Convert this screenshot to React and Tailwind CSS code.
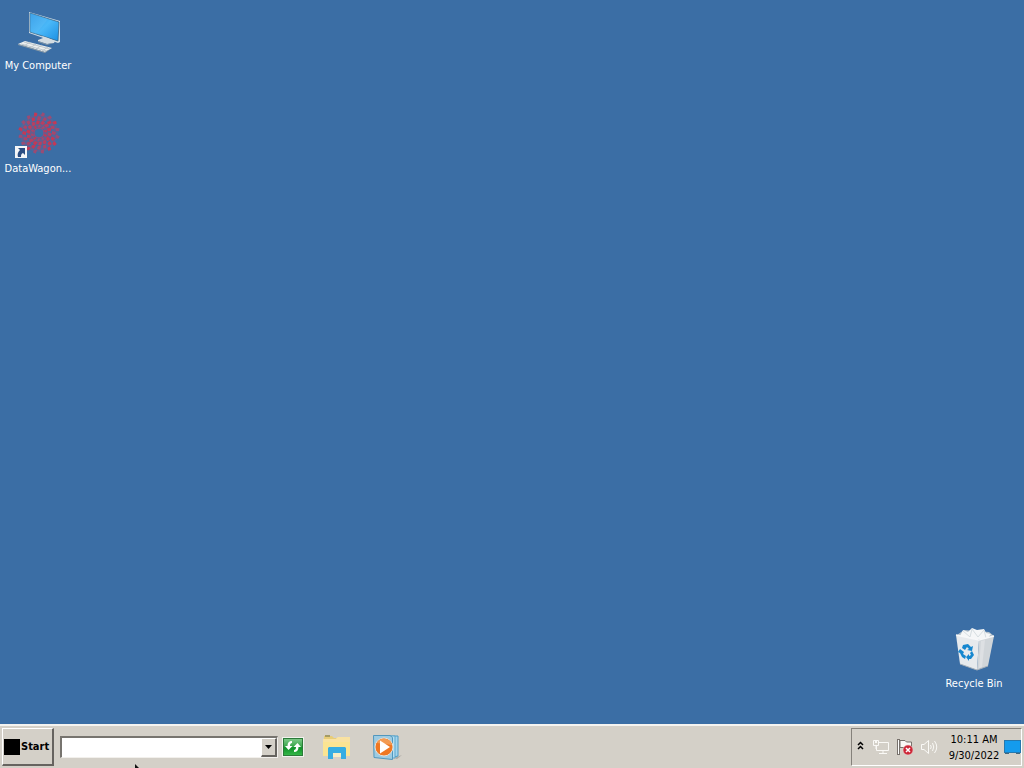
import React from "react";

const ringDots = [
  { r: 7, n: 10, s: 3, c: "#a8476c" },
  { r: 11, n: 14, s: 4, c: "#b93f60" },
  { r: 15, n: 16, s: 4, c: "#a94669" },
  { r: 19, n: 16, s: 4, c: "#9a4c74" },
];

function ComputerIcon() {
  return (
    <svg width="48" height="48" viewBox="0 0 48 48" aria-hidden="true">
      <defs>
        <linearGradient id="screen" x1="0" y1="0" x2="1" y2="1">
          <stop offset="0" stopColor="#2a93e2" />
          <stop offset="0.5" stopColor="#4ab8f8" />
          <stop offset="1" stopColor="#1a8fe3" />
        </linearGradient>
      </defs>
      <path d="M15 4 L46 13 L46 34 L44 35 L15 25 Z" fill="#cfdde6" />
      <path d="M16 5 L45 14 L44 33 L16 24 Z" fill="url(#screen)" stroke="#2c5878" strokeWidth="0.7" />
      <path d="M16 5 L34 11 L22 26 L16 24 Z" fill="#65c1f6" opacity="0.35" />
      <path d="M28 28 L34 30 L41 33 L40 35 L33 36 L24 33 L24 32 L29 30 Z" fill="#d3dce2" />
      <path d="M24 33 L33 36 L40 35 L33 37 L24 34 Z" fill="#8396a5" />
      <path d="M4 36 L11 33 L38 40 L31 44 Z" fill="#edf0f0" />
      <path d="M7 36 L33 43 M10 34 L36 41 M10 38 L16 34 M16 40 L22 36 M22 41 L28 37 M28 43 L34 39" stroke="#b5bfc4" strokeWidth="0.8" />
      <path d="M4 36 L31 44 L38 40 L31 45 L4 37 Z" fill="#8d9ba5" />
    </svg>
  );
}

function DataWagonIcon() {
  return (
    <svg width="48" height="48" viewBox="0 0 48 48" aria-hidden="true">
      <g transform="translate(25 22)">
        <circle r="9" fill="none" stroke="#9a4c74" strokeWidth="6" opacity="0.45" />
        <circle r="16" fill="none" stroke="#8a5382" strokeWidth="6" opacity="0.3" />
        {ringDots.map((ring) =>
          Array.from({ length: ring.n }, (_, i) => (
            <path
              key={`${ring.r}-${i}`}
              d={`M${ring.r - ring.s / 2} ${-ring.s / 2} l${ring.s} 1 l-1 ${ring.s - 1} l${1 - ring.s} -1 Z`}
              fill={i % 3 === 0 ? "#c43855" : ring.c}
              transform={`rotate(${(360 / ring.n) * i + ring.r * 3})`}
            />
          ))
        )}
        <circle r="5" fill="none" stroke="#b0426a" strokeWidth="1" />
      </g>
      <rect x="1" y="35" width="12" height="12" fill="#f4f6f8" />
      <path d="M4 37 H11 V44 L9 42 C7 43 7 44 7 46 H4 C3 43 4 41 6 39 Z" fill="#2b4d82" />
    </svg>
  );
}

function RecycleIcon() {
  return (
    <svg width="48" height="48" viewBox="0 0 48 48" aria-hidden="true">
      <path d="M7 9 L14 4 L39 6 L44 10 L37 13 L24 14 Z" fill="#b7c3cc" />
      <path d="M10 10 L13 4 L18 6 L22 2 L27 4 L34 3 L36 7 L41 8 L37 13 L22 13 Z" fill="#f5f7f8" />
      <path d="M13 5 L20 11 L22 3 L28 11 L34 4 L36 12" fill="none" stroke="#d6dde1" />
      <path d="M6 9 L29 14 L27 44 L10 38 Z" fill="#e7eaed" />
      <path d="M29 14 L44 10 L38 40 L27 44 Z" fill="#d0d5d9" />
      <path d="M31 15 L35 14 L32 41 L29 42 Z" fill="#dde0e3" />
      <path d="M6 9 L29 14 L44 10" fill="none" stroke="#f7f8f9" strokeWidth="1.3" />
      <path d="M10 38 L27 44 L38 40" fill="none" stroke="#a6afb8" />
      <g fill="#1687cf">
        <path d="M13 19 L18 18 L21 21 L23 20 L22 25 L17 24 L19 23 L17 21 L15 24 L12 22 Z" />
        <path d="M10 23 L14 26 L13 28 L16 30 L15 33 L12 31 L10 27 L8 26 Z" />
        <path d="M22 25 L24 29 L21 33 L19 33 L19 35 L16 31 L19 28 L19 30 L21 29 L20 27 Z" />
      </g>
    </svg>
  );
}

function DesktopItem({ label, children }) {
  return (
    <button
      type="button"
      className="flex w-19 flex-col items-center gap-0.5 text-[11px] leading-4 text-white"
    >
      {children}
      <span className="whitespace-nowrap">{label}</span>
    </button>
  );
}

function GoIcon() {
  return (
    <svg width="22" height="20" viewBox="0 0 22 20" aria-hidden="true">
      <defs>
        <linearGradient id="go" x1="0" y1="0" x2="0" y2="1">
          <stop offset="0" stopColor="#7cc887" />
          <stop offset="0.45" stopColor="#3aa84c" />
          <stop offset="0.55" stopColor="#0f9127" />
          <stop offset="1" stopColor="#35b648" />
        </linearGradient>
      </defs>
      <rect x="0.5" y="0.5" width="21" height="19" fill="#2c7a39" stroke="#f0f3ed" />
      <rect x="2" y="2" width="18" height="16" fill="url(#go)" />
      <path d="M10 4 V6 Q8 6 8 9 H10.500 L6.500 13 L3 9 H5.500 Q5.500 4 10 4 Z" fill="#fff" />
      <path d="M12 15 V13 Q14 13 14 10 H11.500 L15.500 6 L19 10 H16.500 Q16.500 15 12 15 Z" fill="#fff" />
    </svg>
  );
}

function FolderIcon() {
  return (
    <svg width="30" height="26" viewBox="0 0 30 26" aria-hidden="true">
      <path d="M2 2 H10 L12 4 H26 V8 H2 Z" fill="#e8cd78" />
      <path d="M3 1 H8 V3 H3 Z" fill="#a59b64" />
      <path d="M1 5 H14 L16 3 H28 V22 H1 Z" fill="#fbe492" />
      <path d="M1 5 H14 L16 3 H28 V8 H1 Z" fill="#f9e2a2" />
      <path d="M6 25 V14 L7 13 H23 L24 14 V25 H19 V19 H11 V25 Z" fill="#36ade2" />
      <path d="M11 19 H19 V23 H11 Z" fill="#f6edc6" />
    </svg>
  );
}

function MediaIcon() {
  return (
    <svg width="30" height="28" viewBox="0 0 30 28" aria-hidden="true">
      <path d="M22 25 L30 22 L25 26 Z" fill="#aaa8a2" />
      <path d="M14 3 H26 V23 L18 25 Z" fill="#a3d4ec" stroke="#4e9cc6" />
      <path d="M10 3 H23 V25 H14 Z" fill="#b6def0" stroke="#5ba6cd" />
      <path d="M1.500 2.500 H18 L20.500 4.500 V26.500 L2 24.500 Z" fill="#9dcbe2" stroke="#5197be" />
      <circle cx="12" cy="14" r="9" fill="#ef7722" stroke="#e4e1da" strokeWidth="1" />
      <path d="M5 10 A8 8 0 0 1 20 12 Z" fill="#f39a52" />
      <path d="M8 7.500 L18 14 L8 20.500 Z" fill="#fff" />
    </svg>
  );
}

function NetworkIcon() {
  return (
    <svg width="18" height="18" viewBox="0 0 18 18" fill="none" stroke="#faf9f6" aria-hidden="true">
      <path d="M7 4.5 H16.5 V12.5 H4.5 V8 M11 13 V15 M7 15.5 H15" />
      <path d="M1.5 2.5 H6.5 V7.5 H1.5 Z M3.5 3 V5 M4.5 3 V5 M4 8 V11" />
    </svg>
  );
}

function FlagIcon() {
  return (
    <svg width="18" height="18" viewBox="0 0 18 18" aria-hidden="true">
      <path d="M2.5 1 V17" stroke="#77716c" strokeWidth="3" />
      <path d="M2.5 2 V16" stroke="#fff" />
      <path d="M4 2.5 H9 L10.5 4 H15.500 V11.5 H10 L8 9.5 H4 Z" fill="#f9f8f5" stroke="#77716c" />
      <circle cx="12" cy="12" r="5" fill="#cd2637" stroke="#e9c9c8" strokeWidth="0.6" />
      <path d="M10 10 L14 14 M14 10 L10 14" stroke="#fff" strokeWidth="1.5" />
    </svg>
  );
}

function SpeakerIcon() {
  return (
    <svg width="18" height="18" viewBox="0 0 18 18" fill="none" stroke="#faf9f6" aria-hidden="true">
      <path d="M1.5 6.5 H4 L8.5 2.5 V15.5 L4 11.5 H1.5 Z" />
      <path d="M10.5 7 Q12 9 10.5 11 M12.5 5 Q15 9 12.5 13 M14.5 3 Q19 9 14.5 15" />
    </svg>
  );
}

export default function App() {
  return (
    <div className="relative flex min-h-screen flex-col overflow-hidden bg-[#3b6ea5] font-['DejaVu_Sans_Condensed','DejaVu_Sans',sans-serif] font-stretch-condensed">
      <main className="flex flex-1 justify-between pt-2 pr-3 pb-8">
        <div className="flex flex-col gap-[37px]">
          <DesktopItem label="My Computer">
            <ComputerIcon />
          </DesktopItem>
          <DesktopItem label="DataWagon...">
            <DataWagonIcon />
          </DesktopItem>
        </div>
        <div className="flex flex-col justify-end">
          <DesktopItem label="Recycle Bin">
            <RecycleIcon />
          </DesktopItem>
        </div>
      </main>

      <footer className="flex h-11 items-center border-t-2 border-[#f4f3f0] bg-[#d4d0c8] text-[11px] text-black">
        <button
          type="button"
          className="ml-0.5 flex h-9.5 w-13 items-center border-t border-r-2 border-b-2 border-l border-t-white border-r-[#66635f] border-b-[#66635f] border-l-white pl-px font-bold"
        >
          <span className="size-4 shrink-0 bg-black" />
          <span className="pt-0.5 pl-px">Start</span>
        </button>

        <div className="ml-1.5 flex h-5.5 w-[218px] border-t-2 border-r border-b border-l-2 border-t-[#77746f] border-r-[#f2f0ec] border-b-[#f2f0ec] border-l-[#77746f] bg-white">
          <input
            type="text"
            aria-label="Address"
            className="min-w-0 flex-1 bg-white px-1 outline-none"
          />
          <button
            type="button"
            aria-label="Show addresses"
            className="flex w-4 items-center justify-center border-t border-r-2 border-b-2 border-l border-t-white border-r-[#66635f] border-b-[#66635f] border-l-white bg-[#d4d0c8]"
          >
            <svg width="7" height="4" viewBox="0 0 7 4" aria-hidden="true">
              <path d="M0 0 H7 L3.5 4 Z" fill="#000" />
            </svg>
          </button>
        </div>

        <button type="button" aria-label="Go" className="ml-1">
          <GoIcon />
        </button>
        <button type="button" aria-label="File Explorer" className="ml-4.5">
          <FolderIcon />
        </button>
        <button type="button" aria-label="Media Player" className="ml-5">
          <MediaIcon />
        </button>

        <div className="mr-0.5 ml-auto flex h-9.5 items-center border border-t-[#85817b] border-r-white border-b-white border-l-[#85817b] pl-1">
          <button type="button" aria-label="Show hidden icons" className="flex w-2 justify-center pb-1">
            <svg width="7" height="9" viewBox="0 0 7 9" fill="none" stroke="#000" strokeWidth="1.5" aria-hidden="true">
              <path d="M1 4 L3.5 1.5 L6 4 M1 8 L3.5 5.5 L6 8" />
            </svg>
          </button>
          <div className="ml-2 flex gap-1.5">
            <button type="button" aria-label="Network">
              <NetworkIcon />
            </button>
            <button type="button" aria-label="Notifications">
              <FlagIcon />
            </button>
            <button type="button" aria-label="Volume">
              <SpeakerIcon />
            </button>
          </div>
          <div className="ml-2 flex w-14 flex-col items-center pt-0.5 leading-4 whitespace-nowrap">
            <span>10:11 AM</span>
            <span>9/30/2022</span>
          </div>
          <button type="button" aria-label="Show desktop" className="ml-0.5">
            <svg width="17" height="14" viewBox="0 0 17 14" aria-hidden="true">
              <rect x="0.5" y="0.5" width="16" height="12" fill="#149bed" stroke="#2578ae" />
              <path d="M1 13.5 H5 M12 13.5 H16" stroke="#41677e" />
            </svg>
          </button>
        </div>
      </footer>

      <svg className="absolute bottom-0 left-[135px]" width="4" height="4" viewBox="0 0 4 4" aria-hidden="true">
        <path d="M0 0 L4 4 H0 Z" fill="#111" />
      </svg>
    </div>
  );
}
